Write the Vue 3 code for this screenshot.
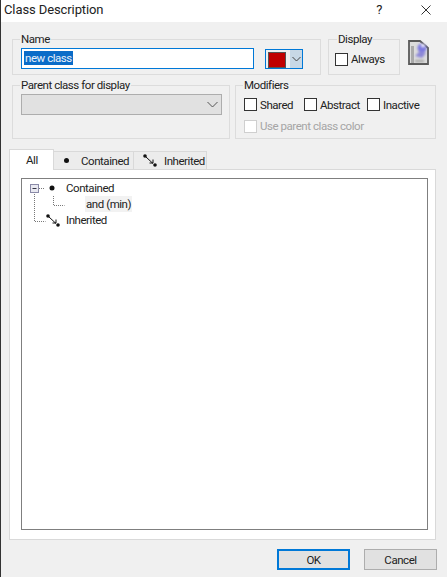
<template>
  <div class="dialog">
    <div class="titlebar">
      <span class="title">Class Description</span>
      <span class="help">?</span>
      <svg class="close" width="10" height="10" viewBox="0 0 10 10"><path d="M.5.5l9 9M9.500.5l-9 9" stroke="#333" fill="none" /></svg>
    </div>

    <div class="body">
      <div class="top-row">
        <fieldset class="group name-group">
          <legend>Name</legend>
          <div class="name-row">
            <div class="name-input"><span class="selected">new class</span></div>
            <div class="color-pick">
              <span class="swatch"></span>
              <span class="color-arrow">
                <svg width="9" height="6" viewBox="0 0 9 6"><path d="M.5 1l4 4 4-4" stroke="#444" fill="none" /></svg>
              </span>
            </div>
          </div>
        </fieldset>
        <fieldset class="group display-group">
          <legend>Display</legend>
          <label class="check"><span class="box"></span>Always</label>
        </fieldset>
        <svg class="doc-icon" width="21" height="25" viewBox="0 0 21 25">
          <defs>
            <filter id="soft"><feGaussianBlur stdDeviation="0.900" /></filter>
          </defs>
          <path d="M1 1h11l8 7v16H1z" fill="#dcdcdc" stroke="#5a5a5a" stroke-width="1.800" />
          <path d="M3 23V6h3v17z" fill="#a9a9a9" />
          <g filter="url(#soft)">
            <circle cx="14" cy="8" r="4.500" fill="#7c78e0" />
            <circle cx="15" cy="5.500" r="1.800" fill="#eeeefc" />
            <path d="M7 16l5-5 6 2-4 5z" fill="#8d88d8" />
            <path d="M7 20h9v2H7z" fill="#a0a0a0" />
          </g>
        </svg>
      </div>

      <div class="second-row">
        <fieldset class="group parent-group">
          <legend>Parent class for display</legend>
          <div class="select">
            <svg width="11" height="7" viewBox="0 0 11 7"><path d="M.5 1l5 5 5-5" stroke="#555" fill="none" /></svg>
          </div>
        </fieldset>
        <fieldset class="group modifiers-group">
          <legend>Modifiers</legend>
          <div class="mod-row">
            <label v-for="m in modifiers" :key="m" class="check"><span class="box"></span>{{ m }}</label>
          </div>
          <label class="check disabled"><span class="box"></span>Use parent class color</label>
        </fieldset>
      </div>

      <div class="tabs">
        <div class="tab active">All</div>
        <div class="tab contained">
          <span class="dot"></span>
          Contained
        </div>
        <div class="tab inherited">
          <svg width="15" height="13" viewBox="0 0 15 13"><use href="#inherit-glyph" /></svg>
          Inherited
        </div>
      </div>

      <div class="panel">
        <div class="tree">
          <svg class="tree-lines" width="60" height="50" viewBox="0 0 60 50">
            <defs>
              <g id="inherit-glyph">
                <circle cx="2" cy="2" r="1.800" fill="#111" />
                <circle cx="12" cy="11" r="1.800" fill="#111" />
                <path d="M3 3l7 6.500M6.500 9h3.500V5.500" stroke="#111" fill="none" />
              </g>
            </defs>
            <path d="M12.500 15v27.500h11M31.500 17v9.500h11M17 9.500h5" stroke="#777" stroke-dasharray="1 1" fill="none" />
            <rect x="8.500" y="5.500" width="8" height="8" fill="#e8e8f0" stroke="#8a8aa8" />
            <path d="M10.500 9.500h4" stroke="#334" />
            <circle cx="30" cy="9" r="2.500" fill="#111" />
            <use href="#inherit-glyph" x="24" y="35" />
          </svg>
          <div class="node">Contained</div>
          <div class="node child"><span>and (min)</span></div>
          <div class="node">Inherited</div>
        </div>
      </div>

      <div class="buttons">
        <button class="btn default">OK</button>
        <button class="btn">Cancel</button>
      </div>
    </div>
  </div>
</template>

<script setup>
const modifiers = ["Shared", "Abstract", "Inactive"];
</script>

<style>
html,
body {
  margin: 0;
  background: #f0f0f0;
}
</style>

<style scoped>
.dialog {
  width: 447px;
  height: 577px;
  display: flex;
  flex-direction: column;
  box-sizing: border-box;
  border-left: 1px solid #333;
  background: #f0f0f0;
  font-family: Roboto, "Liberation Sans", Arial, sans-serif;
  font-size: 11.500px;
  letter-spacing: -0.450px;
  color: #222;
  overflow: hidden;
}
.titlebar {
  height: 22px;
  flex-shrink: 0;
  background: #fff;
  display: flex;
  align-items: center;
  padding-left: 3px;
}
.title {
  font-size: 13px;
  letter-spacing: -0.100px;
  flex: 1;
  margin-top: -3px;
}
.help {
  font-size: 13px;
  margin-right: 39px;
  margin-top: -3px;
}
.close {
  margin-right: 16px;
  margin-top: -3px;
}
.body {
  flex: 1;
  display: flex;
  flex-direction: column;
  padding: 11px 11px 0 8px;
}
.group {
  margin: 0;
  padding: 0 8px;
  border: 1px solid #dcdcdc;
  min-width: 0;
  box-sizing: border-box;
}
.group legend {
  padding: 0 1px;
  margin-left: -1px;
  line-height: 13px;
}
.top-row {
  display: flex;
  align-items: flex-start;
  height: 42px;
}
.name-group {
  width: 309px;
  margin-left: 3px;
  height: 42px;
}
.name-row {
  display: flex;
  margin-top: 2px;
}
.name-input {
  width: 233px;
  height: 21px;
  box-sizing: border-box;
  border: 1px solid #0078d7;
  background: #fff;
  padding: 2px 2px;
  line-height: 14px;
  color: #333;
}
.selected {
  display: inline-block;
  background: #0a6cc8;
  color: #e8f0fa;
  padding: 0 1px;
}
.color-pick {
  margin: 1px 0 0 11px;
  width: 38px;
  height: 20px;
  box-sizing: border-box;
  border: 1px solid #0078d7;
  display: flex;
  align-items: stretch;
  padding: 2px 0 0 2px;
}
.swatch {
  width: 16px;
  height: 14px;
  background: #c00000;
  border: 1px solid #555;
}
.color-arrow {
  flex: 1;
  margin: -2px 0 0 4px;
  background: #c8d8e6;
  display: flex;
  align-items: center;
  justify-content: center;
}
.display-group {
  width: 72px;
  height: 42px;
  margin-left: 7px;
  padding-left: 6px;
}
.display-group legend {
  margin-left: 2px;
}
.check {
  display: inline-flex;
  align-items: center;
  gap: 3px;
}
.box {
  width: 11px;
  height: 11px;
  border: 1px solid #333;
  background: #fff;
  display: inline-block;
}
.display-group .check {
  margin-top: 6px;
}
.doc-icon {
  margin: 7px 0 0 8px;
}
.second-row {
  display: flex;
  margin: 4px 0 0 3px;
  gap: 5px;
}
.second-row .group {
  height: 60px;
}
.parent-group {
  width: 218px;
}
.select {
  width: 201px;
  height: 21px;
  margin-top: 2px;
  box-sizing: border-box;
  border: 1px solid #adadad;
  background: #e1e1e1;
  display: flex;
  align-items: center;
  justify-content: flex-end;
  padding-right: 3px;
}
.modifiers-group {
  width: 201px;
}
.mod-row {
  display: grid;
  grid-template-columns: 60px 63px auto;
  margin-top: 3px;
  height: 19px;
  align-items: center;
}
.modifiers-group > .check {
  margin-top: 5px;
}
.disabled {
  color: #a5a5a5;
}
.disabled .box {
  border-color: #cfcfcf;
}
.tabs {
  display: flex;
  height: 20px;
  margin-top: 10px;
  position: relative;
  z-index: 1;
}
.tab {
  height: 19px;
  margin-top: 2px;
  display: flex;
  align-items: center;
  background: #ececec;
  border: 1px solid #d9d9d9;
  border-left: 0;
  box-sizing: border-box;
}
.tab.active {
  background: #fff;
  width: 45px;
  height: 21px;
  margin-top: 0;
  padding-left: 16px;
  border: 1px solid #d9d9d9;
  border-bottom: 0;
}
.contained {
  width: 80px;
  padding-left: 10px;
  gap: 12px;
}
.inherited {
  width: 73px;
  padding-left: 9px;
  gap: 6px;
}
.dot {
  width: 5px;
  height: 5px;
  border-radius: 50%;
  background: #111;
}
.panel {
  height: 371px;
  flex-shrink: 0;
  background: #fff;
  border: 1px solid #d9d9d9;
  box-sizing: border-box;
  padding: 8px 7px 9px 11px;
}
.tree {
  height: 100%;
  box-sizing: border-box;
  border: 1px solid #7f7f7f;
  padding: 1px 0 0 44px;
  position: relative;
}
.tree-lines {
  position: absolute;
  left: 0;
  top: 0;
}
.node {
  height: 16px;
  line-height: 16px;
}
.child span {
  margin-left: 19px;
  background: #f2f2f2;
  padding: 1px;
}
.buttons {
  display: flex;
  justify-content: flex-end;
  gap: 14px;
  margin-top: 9px;
  margin-right: -1px;
}
.btn {
  width: 73px;
  height: 21px;
  box-sizing: border-box;
  border: 1px solid #adadad;
  background: #e1e1e1;
  font: inherit;
  letter-spacing: inherit;
  color: #222;
  padding: 0;
}
.btn.default {
  border: 2px solid #0078d7;
}
</style>
